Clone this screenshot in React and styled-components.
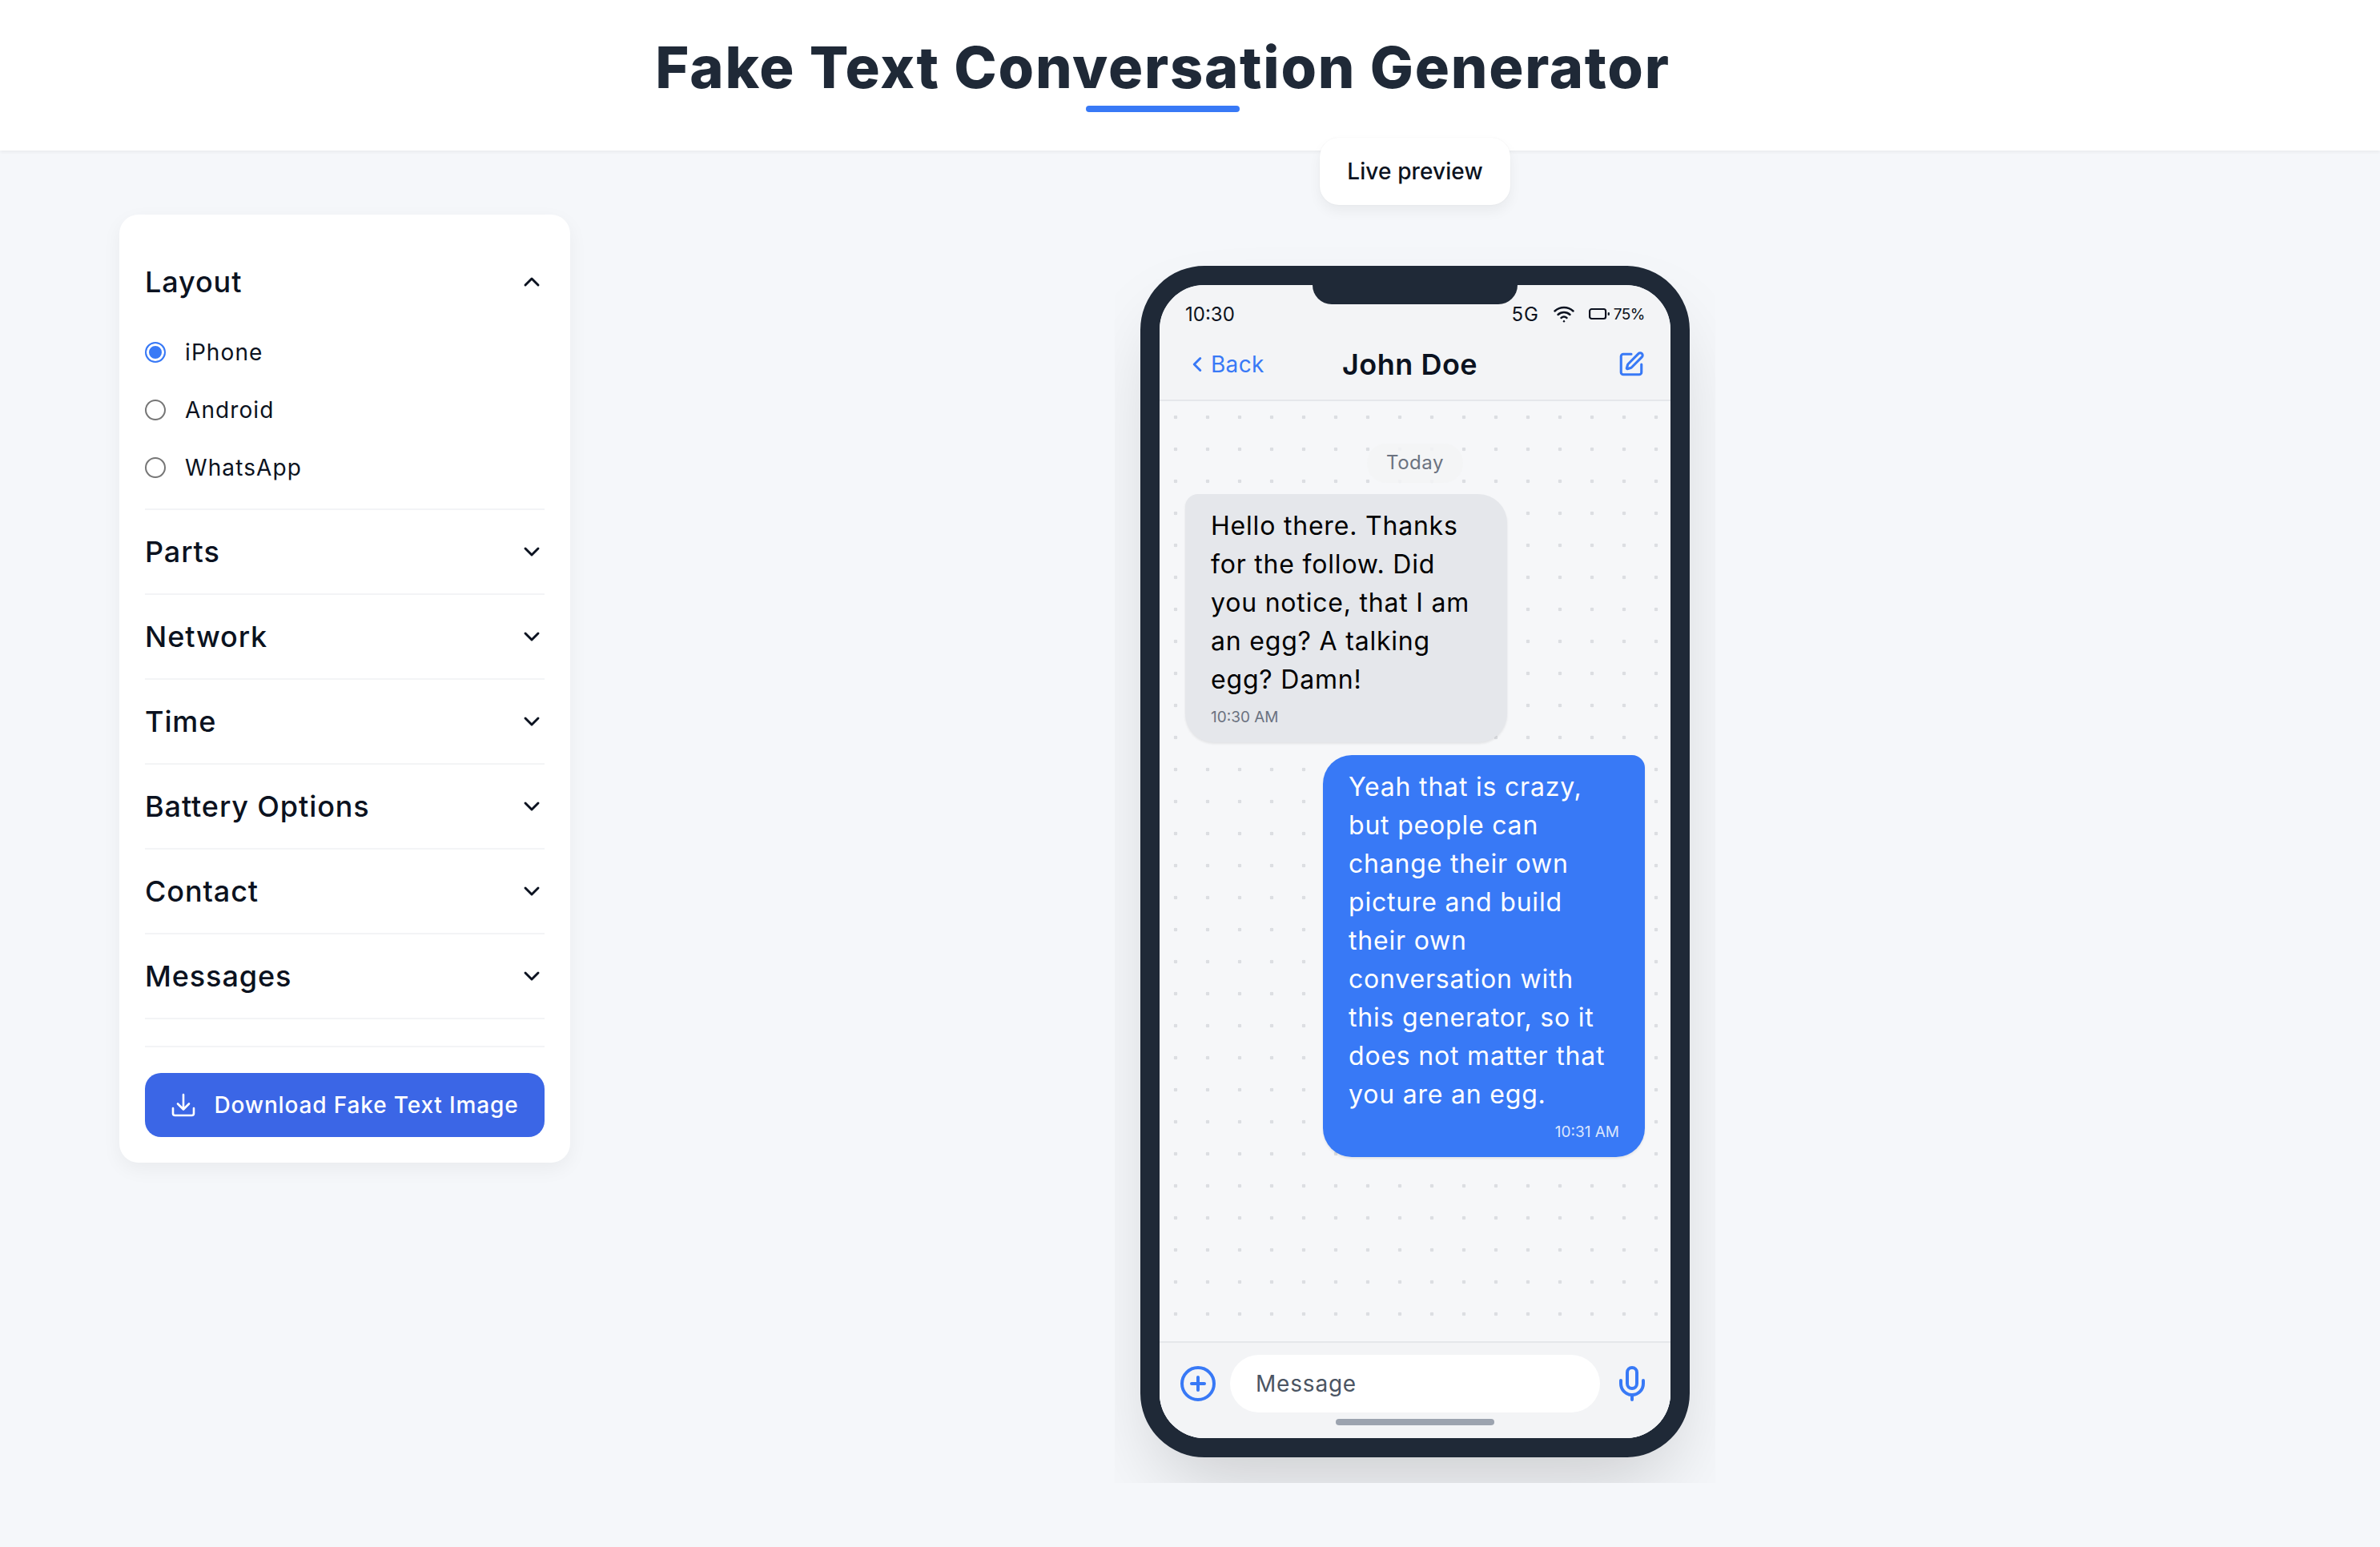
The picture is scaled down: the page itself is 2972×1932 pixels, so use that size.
import React from 'react';
import styled, { createGlobalStyle } from 'styled-components';
import { ChevronDown, ChevronUp, ChevronLeft, CirclePlus, Mic, SquarePen } from 'lucide-react';

const Global = createGlobalStyle`
  html, body { margin: 0; padding: 0; background: #f5f7fa; }
  body { font-family: Inter, "Liberation Sans", sans-serif; color: #0b1220; min-height: 1932px; }
  * { box-sizing: border-box; }
`;

const Header = styled.header`
  height: 188px; background: #fff; box-shadow: 0 2px 4px rgba(0,0,0,.05);
  display: flex; flex-direction: column; align-items: center;
  padding: 42px 68px 0 0;
`;
const Title = styled.h1`
  margin: 0; font-size: 72px; line-height: 84px; font-weight: 800; color: #1f2937; letter-spacing: 1.75px;
`;
const Underline = styled.div`
  width: 192px; height: 8px; background: #3879f6; border-radius: 4px; margin-top: 6px;
`;
const Main = styled.main`
  display: flex; align-items: flex-start; padding: 80px 150px 0 149px;
`;
const Card = styled.aside`
  width: 563px; flex: none; background: #fff; border-radius: 24px; padding: 32px;
  box-shadow: 0 8px 24px rgba(0,0,0,.05);
`;
const Section = styled.section`
  border-bottom: 2px solid #f3f4f6;
`;
const SectionHead = styled.div`
  height: 104px; display: flex; align-items: center; justify-content: space-between;
  font-size: 36px; font-weight: 500; color: #0b1220; letter-spacing: 0.9px;
  svg { flex: none; }
`;
const RadioList = styled.div`
  display: flex; flex-direction: column; padding-bottom: 15px;
`;
const RadioRow = styled.label`
  height: 72px; display: flex; align-items: center; gap: 24px; font-size: 28px; color: #0b1220; letter-spacing: 1.1px;
`;
const Radio = styled.input`
  appearance: none; margin: 0; width: 26px; height: 26px; border-radius: 50%;
  border: 2px solid ${p => (p.checked ? '#3879f6' : '#767676')};
  background: ${p => (p.checked ? '#3879f6' : '#fff')};
  box-shadow: ${p => (p.checked ? 'inset 0 0 0 3px #fff' : 'none')};
`;
const Rule = styled.div`
  height: 2px; background: #f3f4f6; margin: 33px 0 32px;
`;
const DownloadButton = styled.button`
  width: 100%; height: 80px; border: 0; border-radius: 20px; background: #3b66e6; color: #fff;
  display: flex; align-items: center; justify-content: center; gap: 24px;
  font-family: inherit; font-size: 28px; font-weight: 500; letter-spacing: 0.85px;
`;
const PreviewColumn = styled.div`
  flex: 1; position: relative; display: flex; justify-content: center;
`;
const Pill = styled.div`
  position: absolute; top: -96px; left: 50%; transform: translateX(-50%);
  width: 238px; height: 84px; background: #fff; border-radius: 24px; z-index: 2;
  display: flex; align-items: center; justify-content: center;
  font-size: 28px; font-weight: 500; color: #0b1220; letter-spacing: 0.1px;
  box-shadow: 0 8px 16px rgba(0,0,0,.05), 0 0 2px rgba(0,0,0,.06);
`;
const Stage = styled.div`
  margin-top: 32px; padding: 32px; overflow: hidden;
`;
const Phone = styled.div`
  position: relative; width: 686px; height: 1488px; border: 24px solid #1f2937; border-radius: 80px;
  box-shadow: 0 50px 100px -24px rgba(0,0,0,.18);
`;
const Screen = styled.div`
  height: 100%; border-radius: 56px; overflow: hidden; background: #f3f4f6;
  display: flex; flex-direction: column;
`;
const Notch = styled.div`
  position: absolute; top: 0; left: 191px; width: 256px; height: 24px; background: #1f2937;
  border-radius: 0 0 24px 24px; z-index: 1;
`;
const StatusBar = styled.div`
  height: 60px; padding: 12px 32px 0; display: flex; justify-content: space-between; align-items: center;
  font-size: 24px; color: #0b1220;
`;
const StatusRight = styled.div`
  display: flex; align-items: center; gap: 18px;
`;
const NetworkLabel = styled.span`
  letter-spacing: 0.8px;
`;
const BatteryGroup = styled.div`
  display: flex; align-items: center; gap: 5px; font-size: 19px; letter-spacing: -0.5px;
`;
const NavBar = styled.div`
  height: 85px; padding: 0 32px 5px; display: flex; align-items: center;
  border-bottom: 2px solid #e5e7eb;
`;
const Back = styled.div`
  flex: none; display: flex; align-items: center; gap: 2px; color: #3879f6; font-size: 28px; letter-spacing: 0.3px;
  width: 196px;
`;
const Name = styled.div`
  font-size: 36px; font-weight: 600; color: #0b1220; letter-spacing: 0.5px;
`;
const EditBtn = styled.div`
  display: flex; color: #3879f6; margin-left: auto;
`;
const Chat = styled.div`
  flex: 1; padding: 53px 32px 0; display: flex; flex-direction: column; gap: 16px;
  background-color: #f6f7f9;
  background-image: radial-gradient(circle at 20px 20px, #dcdee2 2.2px, transparent 2.6px);
  background-size: 40px 40px;
`;
const Today = styled.div`
  align-self: center; padding: 6px 24px; height: 49px; margin-bottom: -2px; border-radius: 24px;
  background: rgba(243,244,246,.85); color: #6b7280; font-size: 24px; line-height: 35px; letter-spacing: 0.5px;
`;
const Bubble = styled.div`
  width: 402px; padding: 16px 32px; font-size: 32px; line-height: 48px; letter-spacing: 0.8px;
  align-self: ${p => (p.$sent ? 'flex-end' : 'flex-start')};
  background: ${p => (p.$sent ? '#3879f6' : '#e5e7eb')};
  color: ${p => (p.$sent ? '#fff' : '#000')};
  border-radius: ${p => (p.$sent ? '36px 16px 36px 36px' : '16px 36px 36px 36px')};
  box-shadow: 0 2px 3px rgba(0,0,0,.08);
`;
const Line = styled.span`
  display: block; white-space: nowrap;
`;
const Stamp = styled.div`
  margin-top: 8px; font-size: 19px; line-height: 30px; letter-spacing: 0;
  text-align: ${p => (p.$sent ? 'right' : 'left')};
  color: ${p => (p.$sent ? '#dbe6fd' : '#6b7280')};
`;
const Composer = styled.div`
  position: relative; height: 121px; border-top: 2px solid #e5e7eb; padding: 15px 24px 0;
  display: flex; align-items: flex-start; background: #f3f4f6;
`;
const RoundIcon = styled.div`
  flex: none; display: flex; color: #3879f6; margin-top: 12px;
`;
const Field = styled.div`
  flex: 1; height: 72px; margin: 0 16px; padding: 0 32px; border-radius: 36px; background: #fff;
  display: flex; align-items: center; font-size: 28px; color: #4b5563; letter-spacing: 0.8px;
`;
const HomeBar = styled.div`
  position: absolute; left: 220px; bottom: 16px; width: 198px; height: 8px; border-radius: 4px; background: #9ca3af;
`;

const sections = ['Parts', 'Network', 'Time', 'Battery Options', 'Contact', 'Messages'];
const received = ['Hello there. Thanks', 'for the follow. Did', 'you notice, that I am', 'an egg? A talking', 'egg? Damn!'];
const sent = ['Yeah that is crazy,', 'but people can', 'change their own', 'picture and build', 'their own', 'conversation with', 'this generator, so it', 'does not matter that', 'you are an egg.'];

const DownloadIcon = () => (
  <svg width="30" height="30" viewBox="0 0 30 30" fill="none" stroke="#fff" strokeWidth="2.6" strokeLinecap="round" strokeLinejoin="round">
    <path d="M15 2v18M8 13.500l7 7 7-7" />
    <path d="M2 19v6.500A2.500 2.500 0 0 0 4.500 28h21a2.500 2.500 0 0 0 2.500-2.500V19" />
  </svg>
);
const WifiIcon = () => (
  <svg width="26" height="22" viewBox="0 0 26 22" fill="none" stroke="#0b1220" strokeWidth="2.400" strokeLinecap="round">
    <path d="M1.500 7.500a17 17 0 0 1 23 0" />
    <path d="M5.500 12a11 11 0 0 1 15 0" />
    <path d="M9.500 16a5.500 5.500 0 0 1 7 0" />
    <path d="M13 20.200v.1" />
  </svg>
);
const BatteryIcon = () => (
  <svg width="26" height="16" viewBox="0 0 26 16" fill="none" stroke="#0b1220" strokeWidth="2.200" strokeLinecap="round">
    <rect x="1.100" y="2" width="20" height="12" rx="2.500" />
    <path d="M24.800 7v2" />
  </svg>
);

export default function App() {
  return (
    <>
      <Global />
      <Header>
        <Title>Fake Text Conversation Generator</Title>
        <Underline />
      </Header>
      <Main>
        <Card>
          <Section>
            <SectionHead>Layout<ChevronUp size={32} strokeWidth={2.2} /></SectionHead>
            <RadioList>
              <RadioRow><Radio type="radio" name="l" checked readOnly />iPhone</RadioRow>
              <RadioRow><Radio type="radio" name="l" checked={false} readOnly />Android</RadioRow>
              <RadioRow><Radio type="radio" name="l" checked={false} readOnly />WhatsApp</RadioRow>
            </RadioList>
          </Section>
          {sections.map(s => (
            <Section key={s}>
              <SectionHead>{s}<ChevronDown size={32} strokeWidth={2.2} /></SectionHead>
            </Section>
          ))}
          <Rule />
          <DownloadButton><DownloadIcon />Download Fake Text Image</DownloadButton>
        </Card>
        <PreviewColumn>
          <Pill>Live preview</Pill>
          <Stage>
            <Phone>
              <Notch />
              <Screen>
                <StatusBar>
                  <span>10:30</span>
                  <StatusRight>
                    <NetworkLabel>5G</NetworkLabel>
                    <WifiIcon />
                    <BatteryGroup><BatteryIcon /><span>75%</span></BatteryGroup>
                  </StatusRight>
                </StatusBar>
                <NavBar>
                  <Back><ChevronLeft size={30} strokeWidth={2.4} />Back</Back>
                  <Name>John Doe</Name>
                  <EditBtn><SquarePen size={34} strokeWidth={2.2} /></EditBtn>
                </NavBar>
                <Chat>
                  <Today>Today</Today>
                  <Bubble>
                    {received.map(l => <Line key={l}>{l}</Line>)}
                    <Stamp>10:30 AM</Stamp>
                  </Bubble>
                  <Bubble $sent>
                    {sent.map(l => <Line key={l}>{l}</Line>)}
                    <Stamp $sent>10:31 AM</Stamp>
                  </Bubble>
                </Chat>
                <Composer>
                  <RoundIcon><CirclePlus size={48} strokeWidth={2} /></RoundIcon>
                  <Field>Message</Field>
                  <RoundIcon><Mic size={48} strokeWidth={2} /></RoundIcon>
                  <HomeBar />
                </Composer>
              </Screen>
            </Phone>
          </Stage>
        </PreviewColumn>
      </Main>
    </>
  );
}
